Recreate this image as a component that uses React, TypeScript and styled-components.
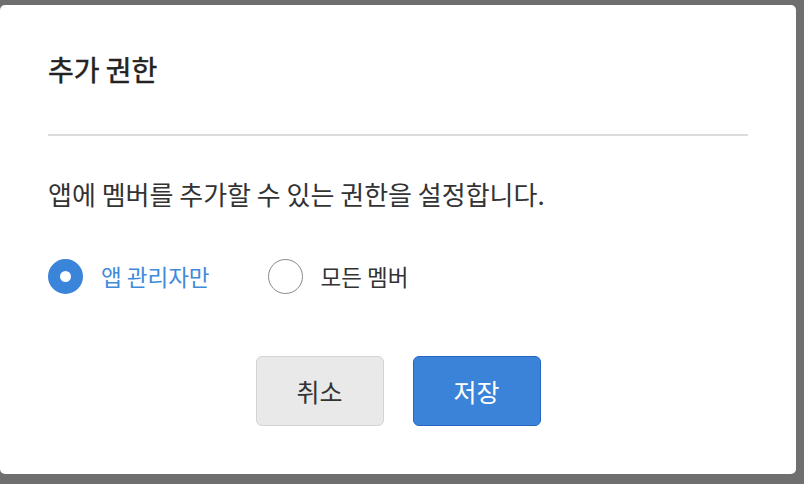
import styled, { createGlobalStyle } from "styled-components";
import { useState } from "react";

const GlobalStyle = createGlobalStyle`
  html, body {
    margin: 0;
    padding: 0;
    background: #6f6f6f;
    font-family: "Noto Sans CJK KR", "Noto Sans", sans-serif;
  }
`;

const options = [
  { id: "admin", label: "앱 관리자만" },
  { id: "all", label: "모든 멤버" },
];

export default function App() {
  const [selected, setSelected] = useState("admin");

  return (
    <Backdrop>
      <GlobalStyle />
      <Dialog>
        <Header>
          <h2>추가 권한</h2>
        </Header>
        <Description>앱에 멤버를 추가할 수 있는 권한을 설정합니다.</Description>
        <RadioGroup>
          {options.map((opt) => (
            <RadioItem key={opt.id} onClick={() => setSelected(opt.id)}>
              <RadioCircle $checked={selected === opt.id} />
              <RadioLabel $checked={selected === opt.id}>{opt.label}</RadioLabel>
            </RadioItem>
          ))}
        </RadioGroup>
        <Actions>
          <Button>취소</Button>
          <Button $primary>저장</Button>
        </Actions>
      </Dialog>
    </Backdrop>
  );
}

const Backdrop = styled.div`
  width: 804px;
  height: 484px;
  padding-top: 5px;
  box-sizing: border-box;
`;

const Dialog = styled.div`
  width: 796px;
  height: 469px;
  box-sizing: border-box;
  padding: 0 48px 48px;
  background: #fff;
  border-radius: 5px;
  display: flex;
  flex-direction: column;
`;

const Header = styled.div`
  padding: 46px 0 47px;
  border-bottom: 2px solid #dcdcdc;
  h2 {
    margin: 0;
    font-size: 28px;
    line-height: 36px;
    font-weight: 400;
    color: #222;
    -webkit-text-stroke: 0.5px #222;
  }
`;

const Description = styled.p`
  margin: 40px 0 0;
  font-size: 26px;
  line-height: 36px;
  color: #333;
`;

const RadioGroup = styled.div`
  margin-top: 46px;
  display: flex;
  gap: 58px;
`;

const RadioItem = styled.label`
  display: flex;
  align-items: center;
  gap: 18px;
  height: 36px;
  cursor: pointer;
`;

const RadioCircle = styled.span<{ $checked?: boolean }>`
  width: 35px;
  height: 35px;
  box-sizing: border-box;
  border-radius: 50%;
  border: ${(p) => (p.$checked ? "12px solid #3a84d9" : "1.5px solid #8a8a8a")};
  background: #fff;
`;

const RadioLabel = styled.span<{ $checked?: boolean }>`
  font-size: 22.5px;
  line-height: 36px;
  color: ${(p) => (p.$checked ? "#3f8ad9" : "#333")};
`;

const Actions = styled.div`
  margin-top: 62px;
  display: flex;
  justify-content: center;
  gap: 29px;
`;

const Button = styled.button<{ $primary?: boolean }>`
  width: 128px;
  height: 70px;
  border-radius: 6px;
  font-family: inherit;
  font-size: 25px;
  cursor: pointer;
  background: ${(p) => (p.$primary ? "#3a83d8" : "#e9e9e9")};
  border: 1px solid ${(p) => (p.$primary ? "#2566c0" : "#d3d3d3")};
  color: ${(p) => (p.$primary ? "#fff" : "#333")};
`;
